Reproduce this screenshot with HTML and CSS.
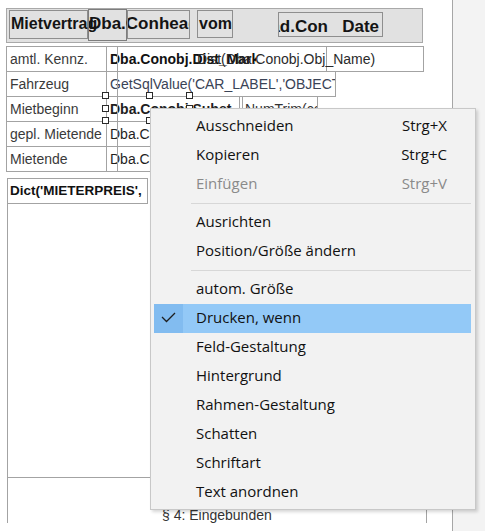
FILE: index.html
```html
<!DOCTYPE html>
<html lang="de">
<head>
<meta charset="utf-8">
<title>Berichtsdesigner</title>
<link rel="stylesheet" href="styles.css">
</head>
<body>
<div class="screen">
  <div class="page">
    <div class="hdr">
      <div class="hbox hb-a"><span class="ht">Mietvertrag</span></div>
      <div class="hgrp">
        <div class="hbox hb-b"><span class="ht">Dba.Conhead.Con_Nr</span></div>
        <div class="hbox hb-c"></div>
      </div>
      <div class="hbox hb-d"><span class="ht">vom</span></div>
      <div class="hbox hb-e"><span class="ht ht-e">ad.Con&nbsp;&nbsp; Date</span></div>
    </div>

    <div class="tbl">
      <div class="row">
        <div class="cell lab">amtl. Kennz.</div>
        <div class="cell val v1"><span class="clipb">Dba.Conobj.Dist_MarkCo</span><span class="ovl">Dist(Dba.Conobj.Obj_Name)</span></div>
        <div class="cell ext"></div>
      </div>
      <div class="row">
        <div class="cell lab">Fahrzeug</div>
        <div class="cell val v2 clip">GetSqlValue('CAR_LABEL','OBJECT_ID')</div>
      </div>
      <div class="row">
        <div class="cell lab">Mietbeginn</div>
        <div class="cell val v3 clip bold">Dba.Conobj.Subst</div>
        <div class="cell box3 clip">NumTrim(cc</div>
      </div>
      <div class="row">
        <div class="cell lab">gepl. Mietende</div>
        <div class="cell val v3 clip">Dba.Conobj.Plan_Ende</div>
      </div>
      <div class="row">
        <div class="cell lab">Mietende</div>
        <div class="cell val v3 clip">Dba.Conobj.Ende</div>
      </div>
    </div>

    <div class="sect">
      <div class="dict">Dict('MIETERPREIS',&nbsp;&nbsp;&nbsp;'Preis')</div>
      <div class="filler"></div>
      <div class="para">§ 4: Eingebunden</div>
    </div>

    <span class="hnd h-tl"></span>
    <span class="hnd h-tm"></span>
    <span class="hnd h-tr"></span>
    <span class="hnd h-ml"></span>
    <span class="hnd h-mr"></span>
    <span class="hnd h-bl"></span>
    <span class="hnd h-bm"></span>
  </div>
  <div class="side"></div>

  <div class="menu">
    <div class="mi"><span class="chk"></span><span class="lbl">Ausschneiden</span><span class="key">Strg+X</span></div>
    <div class="mi"><span class="chk"></span><span class="lbl">Kopieren</span><span class="key">Strg+C</span></div>
    <div class="mi dis"><span class="chk"></span><span class="lbl">Einfügen</span><span class="key">Strg+V</span></div>
    <div class="sep"></div>
    <div class="mi"><span class="chk"></span><span class="lbl">Ausrichten</span></div>
    <div class="mi"><span class="chk"></span><span class="lbl">Position/Größe ändern</span></div>
    <div class="sep"></div>
    <div class="mi"><span class="chk"></span><span class="lbl">autom. Größe</span></div>
    <div class="mi sel"><span class="chk"><svg width="29" height="29" viewBox="0 0 29 29"><polyline points="8,13 12.5,17.5 21,9" fill="none" stroke="#1e1e1e" stroke-width="1.3"/></svg></span><span class="lbl">Drucken, wenn</span></div>
    <div class="mi"><span class="chk"></span><span class="lbl">Feld-Gestaltung</span></div>
    <div class="mi"><span class="chk"></span><span class="lbl">Hintergrund</span></div>
    <div class="mi"><span class="chk"></span><span class="lbl">Rahmen-Gestaltung</span></div>
    <div class="mi"><span class="chk"></span><span class="lbl">Schatten</span></div>
    <div class="mi"><span class="chk"></span><span class="lbl">Schriftart</span></div>
    <div class="mi"><span class="chk"></span><span class="lbl">Text anordnen</span></div>
  </div>
</div>
</body>
</html>
```

FILE: styles.css
```css
html, body {
  margin: 0;
  padding: 0;
}
body {
  width: 485px;
  height: 531px;
  overflow: hidden;
  background: #ffffff;
  font-family: "Liberation Sans", Arial, sans-serif;
  color: #222;
}
.screen {
  position: relative;
  display: flex;
  width: 485px;
  height: 531px;
}
.page {
  position: relative;
  flex: none;
  width: 452px;
  height: 531px;
  border-right: 1px solid #a6a6a6;
  background: #fff;
  overflow: hidden;
}
.side {
  flex: 1;
  background: #f3f3f3;
}

/* header band */
.hdr {
  box-sizing: border-box;
  display: flex;
  align-items: flex-start;
  margin: 8px 0 0 6px;
  width: 417px;
  height: 35px;
  border: 1px solid #a9a9a9;
  background: #e1e1e1;
}
.hbox {
  box-sizing: border-box;
  flex: none;
  border: 1px solid #8e8e8e;
  font-size: 16px;
  font-weight: bold;
  color: #141414;
  white-space: nowrap;
}
.ht {
  display: block;
}
.hb-a {
  margin: 1px 0 0 2px;
  width: 79px;
  height: 29px;
  padding-left: 1px;
  line-height: 26px;
}
.hgrp {
  display: flex;
  width: 102px;
  overflow: hidden;
  flex: none;
}
.hb-b {
  width: 39px;
  height: 32px;
  border-color: #7d7d7d;
  padding-left: 0;
  font-size: 17px;
  line-height: 28px;
}
.hb-c {
  margin-top: 1px;
  width: 63px;
  height: 29px;
}
.hb-d {
  margin: 1px 0 0 7px;
  width: 36px;
  height: 28px;
  padding-left: 1px;
  line-height: 26px;
}
.hb-e {
  margin: 3px 0 0 45px;
  width: 105px;
  height: 25px;
  display: flex;
  justify-content: flex-end;
  overflow: hidden;
  font-size: 17px;
}
.ht-e {
  line-height: 18px;
  padding: 5px 3px 0 0;
}

/* field rows */
.tbl {
  margin: 3px 0 0 6px;
}
.row {
  display: flex;
}
.row + .row {
  margin-top: -1px;
}
.cell {
  box-sizing: border-box;
  flex: none;
  height: 26px;
  border: 1px solid #a3a3a3;
  font-size: 14px;
  line-height: 24px;
  white-space: nowrap;
}
.cell + .cell {
  margin-left: -1px;
}
.lab {
  width: 101px;
  padding-left: 3px;
  color: #3a3a3a;
}
.val {
  position: relative;
  padding-left: 3px;
  color: #1e1e1e;
}
.val::before {
  content: "";
  position: absolute;
  left: 10px;
  top: 0;
  bottom: 0;
  width: 1px;
  background: #a3a3a3;
}
.clip {
  overflow: hidden;
}
.bold {
  font-weight: bold;
}
.v1 {
  width: 221px;
}
.v2 {
  width: 230px;
  color: #3a4356;
}
.v3 {
  width: 134px;
}
.clipb {
  display: inline-block;
  vertical-align: top;
  width: 146px;
  overflow: hidden;
  font-weight: bold;
  color: #111;
}
.ovl {
  position: absolute;
  left: 90px;
  top: 0;
  color: #2a2a2a;
}
.ext {
  width: 98px;
}
.row .box3 {
  margin-left: 2px;
  width: 76px;
  padding-left: 2px;
  color: #333;
}

/* lower section */
.sect {
  box-sizing: border-box;
  margin: 6px 0 0 7px;
  width: 420px;
  border-left: 1px solid #a3a3a3;
  border-right: 1px solid #a3a3a3;
}
.dict {
  box-sizing: border-box;
  margin-left: -1px;
  width: 141px;
  height: 26px;
  border: 1px solid #a3a3a3;
  padding-left: 2px;
  font-size: 13.5px;
  font-weight: bold;
  line-height: 24px;
  white-space: nowrap;
  overflow: hidden;
  color: #111;
}
.filler {
  height: 273px;
  border-bottom: 1px solid #a3a3a3;
}
.para {
  padding: 29px 0 0 154px;
  font-size: 14px;
  line-height: 16px;
  color: #333;
}

/* selection handles */
.hnd {
  position: absolute;
  box-sizing: border-box;
  width: 7px;
  height: 7px;
  border: 1px solid #2a2a2a;
  background: #fff;
}
.h-tl { left: 102px; top: 92px; }
.h-tm { left: 146px; top: 92px; }
.h-tr { left: 186px; top: 92px; }
.h-ml { left: 102px; top: 105px; }
.h-mr { left: 186px; top: 105px; }
.h-bl { left: 102px; top: 117px; }
.h-bm { left: 146px; top: 117px; }

/* context menu */
.menu {
  position: absolute;
  left: 150px;
  top: 108px;
  box-sizing: border-box;
  width: 326px;
  padding: 3px 4px 2px 3px;
  border: 1px solid #c8c8c8;
  background: #f2f2f2;
  box-shadow: 2px 2px 3px rgba(0, 0, 0, 0.16);
  font-family: "Open Sans", "Noto Sans", sans-serif;
  font-size: 15px;
  color: #111;
}
.mi {
  display: flex;
  align-items: flex-start;
  height: 29px;
  white-space: nowrap;
}
.chk {
  flex: none;
  align-self: stretch;
  width: 29px;
  display: flex;
}
.lbl,
.key {
  line-height: 26px;
}
.lbl {
  flex: 1;
  padding-left: 13px;
}
.key {
  padding-right: 24px;
}
.mi.dis {
  color: #8a8a8a;
}
.mi.sel {
  background: #93c9f7;
}
.mi.sel .chk {
  background: #82bcf0;
}
.sep {
  display: flex;
  align-items: center;
  height: 9px;
  padding-left: 37px;
}
.sep::after {
  content: "";
  flex: 1;
  height: 1px;
  background: #d7d7d7;
}
```
